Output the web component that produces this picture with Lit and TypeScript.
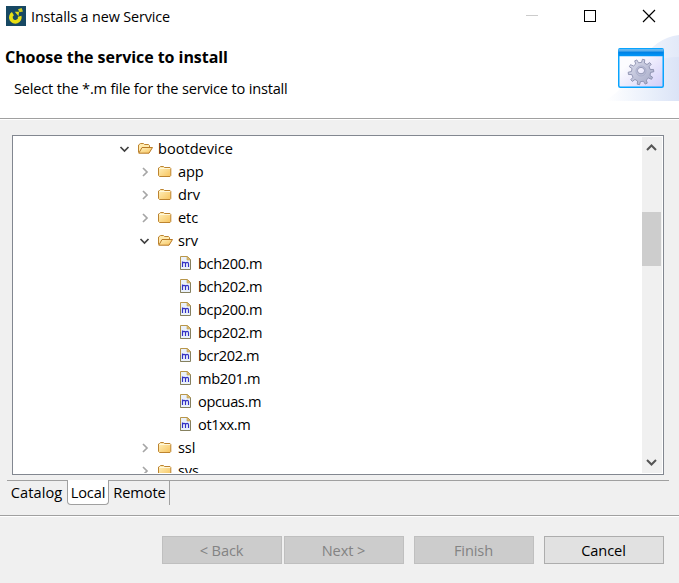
import { LitElement, html, css, svg } from "lit";
import { customElement } from "lit/decorators.js";
import { classMap } from "lit/directives/class-map.js";

type Kind = "open" | "closed" | "file";
interface Node {
  label: string;
  level: number;
  kind: Kind;
}

const nodes: Node[] = [
  { label: "bootdevice", level: 0, kind: "open" },
  { label: "app", level: 1, kind: "closed" },
  { label: "drv", level: 1, kind: "closed" },
  { label: "etc", level: 1, kind: "closed" },
  { label: "srv", level: 1, kind: "open" },
  ...["bch200", "bch202", "bcp200", "bcp202", "bcr202", "mb201", "opcuas", "ot1xx"].map(
    (n): Node => ({ label: `${n}.m`, level: 2, kind: "file" })
  ),
  { label: "ssl", level: 1, kind: "closed" },
  { label: "sys", level: 1, kind: "closed" },
];

const gradients = svg`
  <defs>
    <linearGradient id="fold" x1="0" y1="0" x2="1" y2="1">
      <stop offset="0" stop-color="#fff2c0"/><stop offset="1" stop-color="#f7c35c"/>
    </linearGradient>
  </defs>`;

const closedFolder = html`<svg width="16" height="16" viewBox="0 0 16 16">
  ${gradients}
  <path d="M1.5 12.5V5L2.5 4.5L3.5 3.5H6.5L7.5 4.5H13L13.8 5.5V12.5L13 13.5H2.5Z" fill="url(#fold)" stroke="#bd8430"/>
  <path d="M2.2 5.5H13.2" stroke="#fff8dc"/>
</svg>`;

const openFolder = html`<svg width="16" height="16" viewBox="0 0 16 16">
  ${gradients}
  <path d="M1.5 12.5V5L3.5 3.5H6.5L7.5 4.5H11.5L12.5 5.5V7.5" fill="#ffeaae" stroke="#bd8430"/>
  <path d="M1.8 13.2L5 7.5H15.5L12 13.2Z" fill="url(#fold)" stroke="#b87a26" stroke-linejoin="round"/>
</svg>`;

const moduleFile = html`<svg width="16" height="16" viewBox="0 0 16 16">
  <path d="M3.5 1.5H10.5L13.5 4.5V14.5H3.5Z" fill="#eaf1fb"/>
  <path d="M3.5 14.5V1.5H10.5L13.5 4.5" fill="none" stroke="#b8964a"/>
  <path d="M13.5 4.5V14.5H3.5V8" fill="none" stroke="#85805f"/>
  <path d="M10 1.5V5H13.5Z" fill="#e2bd6d" stroke="#b99a50" stroke-width=".6"/>
  <path d="M5.5 12V6.6M5.5 8.2Q6 7.3 7.1 7.3Q8.5 7.3 8.5 8.8V12M8.5 8.5Q9.1 7.3 10.1 7.3Q11.5 7.3 11.5 8.8V12" fill="none" stroke="#3432c4" stroke-width="1.15"/>
</svg>`;

const icons = { open: openFolder, closed: closedFolder, file: moduleFile };

const gearPath = (() => {
  const teeth = 10;
  const pts: string[] = [];
  for (let i = 0; i < teeth; i++) {
    for (const [o, r] of [[-0.27, 9.6], [-0.17, 12.8], [0.12, 12.8], [0.23, 9.6]]) {
      const a = ((i + o) / teeth) * Math.PI * 2 - 1.35;
      pts.push(`${(23 + r * Math.cos(a)).toFixed(2)} ${(24 + r * Math.sin(a)).toFixed(2)}`);
    }
  }
  return `M${pts.join("L")}ZM26.6 22.6A3.6 3.2 0 1 0 19.4 22.6A3.6 3.2 0 1 0 26.6 22.6Z`;
})();

@customElement("service-tree")
class ServiceTree extends LitElement {
  static styles = css`
    :host { display: flex; box-sizing: border-box; height: 340px; border: 1px solid #828790; padding: 1px; background: #fff; }
    .rows { flex: 1; overflow: hidden; }
    .row { display: flex; align-items: flex-start; height: 23px; }
    .l0 { padding-left: 104px; }
    .l1 { padding-left: 124px; }
    .l2 { padding-left: 144px; }
    .arrow { width: 13px; height: 12px; margin: 6px 6px 0 0; flex: none; }
    .icon { width: 16px; height: 16px; margin: 3px 5px 0 0; }
    .icon svg, .arrow svg, .bar svg { display: block; }
    .label { font-size: 14.6px; line-height: 23px; letter-spacing: 0; white-space: pre; }
    .l1 .label { letter-spacing: -0.1px; }
    .l2 .label { letter-spacing: -0.38px; }
    .bar { width: 20px; background: #f0f0f0; display: flex; flex-direction: column; }
    .thumb { height: 54px; background: #cdcdcd; margin: 55px 0 auto; width: 19px; }
  `;
  arrow(kind: Kind) {
    if (kind === "file") return html`<span class="arrow"></span>`;
    return kind === "open"
      ? html`<span class="arrow"><svg width="13" height="12" viewBox="0 0 13 12"><path d="M2.5 4L6.5 8L10.5 4" fill="none" stroke="#404040" stroke-width="1.7"/></svg></span>`
      : html`<span class="arrow"><svg width="13" height="12" viewBox="0 0 13 12"><path d="M5 2L9 6L5 10" fill="none" stroke="#a6a6a6" stroke-width="1.7"/></svg></span>`;
  }
  render() {
    return html`
      <div class="rows">
        ${nodes.map(
          (n) => html`<div class="row l${n.level}">
            ${this.arrow(n.kind)}<span class="icon">${icons[n.kind]}</span><span class="label">${n.label}</span>
          </div>`
        )}
      </div>
      <div class="bar">
        <svg width="20" height="20"><path d="M5 13L9.5 8.5L14 13" fill="none" stroke="#555" stroke-width="2"/></svg>
        <div class="thumb"></div>
        <svg width="20" height="20"><path d="M5 7L9.5 11.5L14 7" fill="none" stroke="#555" stroke-width="2"/></svg>
      </div>`;
  }
}

@customElement("app-root")
class AppRoot extends LitElement {
  static styles = css`
    :host { display: flex; flex-direction: column; width: 679px; height: 583px; overflow: hidden; background: #f0f0f0; color: #000; font-family: "Open Sans", "Noto Sans", sans-serif; font-size: 14.6px; }
    svg { display: block; }
    .titlebar { display: flex; height: 33px; background: #fff; }
    .logo { margin: 6px 5px 0 6px; }
    .title { flex: 1; line-height: 33px; font-size: 14.4px; letter-spacing: -0.13px; }
    .header { display: flex; height: 85px; background: #fff; border-bottom: 1px solid #a0a0a0; box-shadow: 0 1px #fff; }
    .words { flex: 1; padding-left: 5px; }
    .heading { margin: 13px 0 0; font-size: 16px; line-height: 22px; font-weight: 700; letter-spacing: -0.05px; }
    .sub { margin: 9px 0 0 9px; line-height: 22px; letter-spacing: -0.19px; }
    .banner { margin-top: 2px; }
    service-tree { margin: 16px 15px 0 12px; }
    .tabs { display: flex; box-sizing: border-box; height: 25px; margin: 5px 10px 0 7px; border-top: 1px solid #a0a0a0; line-height: 22px; letter-spacing: -0.1px; }
    .tab { box-sizing: border-box; text-align: center; white-space: nowrap; }
    .catalog { width: 60px; padding-right: 1px; letter-spacing: 0.1px; }
    .remote { width: 61px; padding-left: 1px; border-right: 1px solid #a0a0a0; }
    .active { width: 42px; margin-top: -1px; height: 25px; line-height: 24px; background: #fff; border: 1px solid #a0a0a0; border-top: 0; border-radius: 0 0 4px 4px; }
    .footer { flex: 1; display: flex; justify-content: flex-end; margin-top: 10px; padding: 20px 15px 0 0; border-top: 1px solid #a0a0a0; box-shadow: inset 0 1px #fff; }
    .btn { box-sizing: border-box; width: 120px; height: 28px; margin: 0 0 0 2px; padding: 0 1px 1px 0; border: 1px solid #adadad; background: #e1e1e1; color: #000; font: inherit; letter-spacing: -0.1px; text-align: center; line-height: 20px; }
    .off { border-color: #bfbfbf; background: #ccc; color: #838383; }
    .apart { margin-left: 10px; }
  `;
  button(label: string, disabled: boolean, apart: boolean) {
    return html`<button class=${classMap({ btn: true, off: disabled, apart })} ?disabled=${disabled}>${label}</button>`;
  }
  render() {
    return html`
      <div class="titlebar">
        <svg class="logo" width="20" height="20" viewBox="0 0 20 20">
          <rect width="20" height="20" fill="#174863"/>
          <path d="M6.9 7.6A4.5 4.5 0 1 0 13.7 10.3" fill="none" stroke="#e8de14" stroke-width="3.7"/>
          <path d="M8.8 5.8H13L12.5 10.2Z" fill="#e8de14"/>
          <path d="M12 3.2L15.6 2L17 5.4L13.5 6.3Z" fill="#cfcb1f"/>
        </svg>
        <span class="title">Installs a new Service</span>
        <svg width="153" height="33" viewBox="526 0 153 33" fill="none" shape-rendering="crispEdges">
          <path d="M526 15.5H538" stroke="#ccc"/>
          <rect x="584.5" y="10.5" width="11" height="11" stroke="#000"/>
          <path d="M643 10L655 22M655 10L643 22" stroke="#000" stroke-width="1.15" shape-rendering="auto"/>
        </svg>
      </div>
      <div class="header">
        <div class="words">
          <h1 class="heading">Choose the service to install</h1>
          <p class="sub">Select the *.m file for the service to install</p>
        </div>
        <svg class="banner" width="74" height="66" viewBox="605 35 74 66">
          <defs>
            <linearGradient id="haze"><stop offset="0" stop-color="#fff"/><stop offset=".55" stop-color="#eaf0fb"/><stop offset="1" stop-color="#d9e2f6"/></linearGradient>
            <linearGradient id="pane" x1="0" y1="0" x2="1" y2="1"><stop offset=".3" stop-color="#fcfcff"/><stop offset="1" stop-color="#d2ccf8"/></linearGradient>
            <linearGradient id="bar" x1="0" y1="0" x2="0" y2="1"><stop offset="0" stop-color="#08a4ff"/><stop offset=".15" stop-color="#6fb9ee"/><stop offset=".35" stop-color="#4aa8ec"/><stop offset=".45" stop-color="#0080e4"/><stop offset="1" stop-color="#0098fa"/></linearGradient>
            <linearGradient id="gear" x1="0" y1="0" x2="1" y2="1"><stop offset="0" stop-color="#dcdeed"/><stop offset="1" stop-color="#a4a8c6"/></linearGradient>
          </defs>
          <path d="M605 101Q628 86 642 61Q655 38 679 35V101Z" fill="url(#haze)" opacity=".75"/>
          <path d="M607 101C635 88 637 57 679 57V101Z" fill="url(#haze)" opacity=".8"/>
          <g transform="translate(618 48)">
            <rect x=".75" y=".75" width="44.5" height="38.5" rx="1.5" fill="url(#pane)" stroke="#08a4ff" stroke-width="1.5"/>
            <rect x=".5" y=".5" width="45" height="7.8" rx="1" fill="url(#bar)"/>
            <path d=${gearPath} fill="url(#gear)" fill-rule="evenodd" stroke="#8286a6" stroke-width=".8"/>
            <circle cx="23" cy="23" r="5" fill="none" stroke="#a5a9c9" stroke-width=".8"/>
          </g>
        </svg>
      </div>
      <service-tree></service-tree>
      <div class="tabs">
        <span class="tab catalog">Catalog</span>
        <span class="tab active">Local</span>
        <span class="tab remote">Remote</span>
      </div>
      <div class="footer">
        ${this.button("< Back", true, false)}${this.button("Next >", true, false)}
        ${this.button("Finish", true, true)}${this.button("Cancel", false, true)}
      </div>`;
  }
}
